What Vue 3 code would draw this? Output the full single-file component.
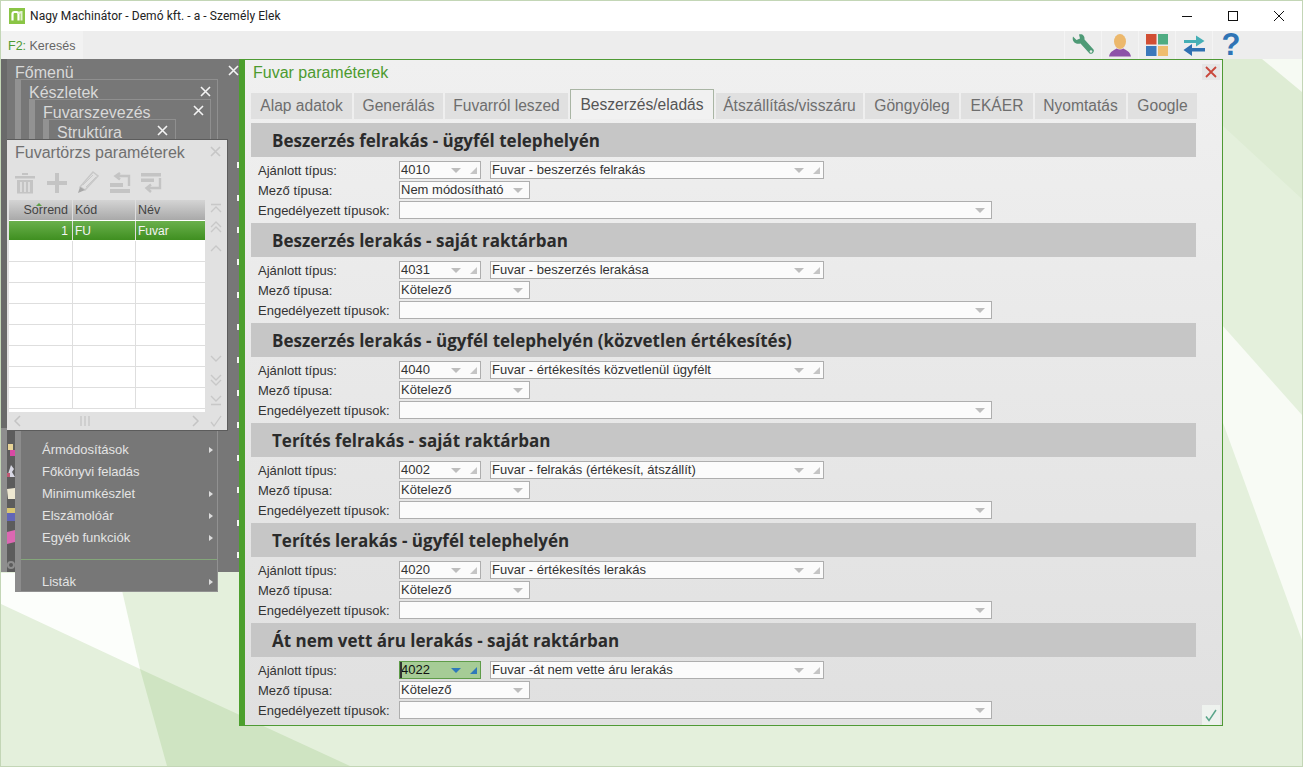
<script setup>
const tabs = [
  { t: 'Alap adatok', w: 101 }, { t: 'Generálás', w: 89 }, { t: 'Fuvarról leszed', w: 123 },
  { t: 'Beszerzés/eladás', w: 144, active: true }, { t: 'Átszállítás/visszáru', w: 147 },
  { t: 'Göngyöleg', w: 94 }, { t: 'EKÁER', w: 72 }, { t: 'Nyomtatás', w: 91 }, { t: 'Google', w: 69 },
]
const sections = [
  { h: 'Beszerzés felrakás - ügyfél telephelyén', c: '4010', d: 'Fuvar - beszerzés felrakás', m: 'Nem módosítható' },
  { h: 'Beszerzés lerakás - saját raktárban', c: '4031', d: 'Fuvar - beszerzés lerakása', m: 'Kötelező' },
  { h: 'Beszerzés lerakás - ügyfél telephelyén (közvetlen értékesítés)', c: '4040', d: 'Fuvar - értékesítés közvetlenül ügyfélt', m: 'Kötelező' },
  { h: 'Terítés felrakás - saját raktárban', c: '4002', d: 'Fuvar - felrakás (értékesít, átszállít)', m: 'Kötelező' },
  { h: 'Terítés lerakás - ügyfél telephelyén', c: '4020', d: 'Fuvar - értékesítés lerakás', m: 'Kötelező' },
  { h: 'Át nem vett áru lerakás - saját raktárban', c: '4022', d: 'Fuvar -át nem vette áru lerakás', m: 'Kötelező', focus: true },
]
const menuItems = [
  { t: 'Ármódosítások', a: true }, { t: 'Főkönyvi feladás' }, { t: 'Minimumkészlet', a: true },
  { t: 'Elszámolóár', a: true }, { t: 'Egyéb funkciók', a: true },
]
const levels = [
  { t: 'Főmenü', c: 'l0' }, { t: 'Készletek', c: 'l1' }, { t: 'Fuvarszevezés', c: 'l2' }, { t: 'Struktúra', c: 'l3' },
]
const emptyRows = [1, 2, 3, 4, 5, 6, 7, 8]
const ticks = [103, 136, 168, 200, 233, 265, 298, 331, 363, 396, 428, 461, 493]
</script>

<template>
  <div class="win">
    <header class="titlebar">
      <svg class="logo" width="16" height="16" viewBox="0 0 16 16">
        <rect width="16" height="16" fill="#8ac545" />
        <path d="M3.500 12.500V6q0-2 2-2h2q2 0 2 2v6.500" fill="none" stroke="#fff" stroke-width="2.200" />
        <path d="M10 6q0-2 2.500-2v8.500" fill="none" stroke="#e4f0d4" stroke-width="2" />
      </svg>
      <span class="apptitle">Nagy Machinátor - Demó kft. - a - Személy Elek</span>
      <div class="caption">
        <svg width="46" height="30" viewBox="0 0 46 30"><path d="M18 15.500h10" stroke="#111" /></svg>
        <svg width="46" height="30" viewBox="0 0 46 30"><rect x="18.500" y="10.500" width="9" height="9" fill="none" stroke="#111" /></svg>
        <svg width="46" height="30" viewBox="0 0 46 30"><path d="M18 10l10 10M28 10L18 20" stroke="#111" /></svg>
      </div>
    </header>
    <div class="toolbar">
      <div class="search"><span class="f2">F2:</span> Keresés</div>
      <div class="tools">
        <span class="tool"><svg width="26" height="26" viewBox="0 0 26 26"><path d="M3 4.500L6.500 8 10 6.500 9 2.500C12 1.500 15 3.500 14.500 7.500L23.500 17.500C25 19.500 22 23 19.500 21.500L10.500 11.500C6 13 1.500 9.500 3 4.500Z" fill="#4e9a76" /><circle cx="21" cy="19.500" r="1.300" fill="#e8efe8" /></svg></span>
        <span class="tool"><svg width="26" height="26" viewBox="0 0 26 26"><ellipse cx="13" cy="9.500" rx="6" ry="7.500" fill="#ecb86c" /><path d="M2 24.500C3 19 7 18.500 9.500 16.500Q13 18.500 16.500 16.500C19 18.500 23 19 24 24.500Z" fill="#8d52a8" /></svg></span>
        <span class="tool"><svg width="26" height="26" viewBox="0 0 26 26"><rect x="2" y="2" width="10.500" height="10.500" fill="#d14e33" /><rect x="14" y="2" width="10" height="10.500" fill="#4fac82" /><rect x="2" y="14" width="10.500" height="10" fill="#3a78ba" /><rect x="14" y="14" width="10" height="10" fill="#efbd6e" /></svg></span>
        <span class="tool"><svg width="26" height="26" viewBox="0 0 26 26"><path d="M3 8h12V3.500L23.500 9 15 14.500V11H3Z" fill="#45afb5" /><path d="M24 16H11v-4L2.500 18 11 24v-4.500h13Z" fill="#2f70b2" /></svg></span>
        <span class="tool qm">?</span>
      </div>
    </div>

    <main class="desktop">
      <svg class="bg" width="1301" height="707" viewBox="0 0 1301 707">
        <path d="M0 514H117L139 610 0 545Z" fill="#fcfefb" />
        <path d="M139 610L349 707H166Z" fill="#cfe4c2" />
        <path d="M1221 0h80v140L1221 66Z" fill="#deecd4" />
        <path d="M1261 0h40v33Z" fill="#f6faf3" />
        <path d="M1221 266l80 90v225L1221 361Z" fill="#f8fbf5" />
      </svg>

      <section class="menus">
        <div class="rail"></div>
        <div class="strip">
          <svg width="8" height="14" viewBox="0 0 8 14"><path d="M1 2h5v6H1Z" fill="#e8d498" /><path d="M3 8h5v6H3Z" fill="#d84aa4" /></svg>
          <svg width="8" height="14" viewBox="0 0 8 14"><path d="M4 1l3 4-2 3 3 5H4L0 13l2-6Z" fill="#d8d8e4" /><path d="M0 9h3v4H0Z" fill="#c05a74" /></svg>
          <svg width="8" height="14" viewBox="0 0 8 14"><path d="M0 3l8-1v11H1Z" fill="#eee8d2" /></svg>
          <svg width="8" height="14" viewBox="0 0 8 14"><path d="M0 0h8v5H0Z" fill="#d8c672" /><path d="M0 5h8v8H0Z" fill="#6266b8" /></svg>
          <svg width="8" height="14" viewBox="0 0 8 14"><path d="M0 2l8-2v12L0 14Z" fill="#dc68b2" /></svg>
          <svg class="gear" width="8" height="8" viewBox="0 0 8 8"><circle cx="4" cy="4" r="3" fill="none" stroke="#8e8e8e" stroke-width="2" /></svg>
        </div>
        <b v-for="y in ticks" :key="y" class="tick" :style="{ top: y + 'px' }"></b>
        <div v-for="l in levels" :key="l.t" class="level" :class="l.c">
          <span class="lt">{{ l.t }}</span>
          <svg class="cx" width="11" height="11" viewBox="0 0 11 11"><path d="M1 1l9 9M10 1l-9 9" stroke="#f4f4f4" stroke-width="1.600" /></svg>
        </div>
        <div class="submenu">
          <div v-for="m in menuItems" :key="m.t" class="mi">{{ m.t }}<em v-if="m.a"></em></div>
          <hr />
          <div class="mi">Listák<em></em></div>
        </div>
      </section>

      <section class="params">
        <div class="ptitle">Fuvartörzs paraméterek</div>
        <svg class="pclose" width="11" height="11" viewBox="0 0 11 11"><path d="M1 1l9 9M10 1l-9 9" stroke="#c6c6c6" stroke-width="1.600" /></svg>
        <div class="picons">
          <svg width="22" height="24" viewBox="0 0 22 24"><path d="M1 5h20v2.500H1ZM8 2h6v2H8ZM3 9h16v13.500H3Z" fill="#c4c4c4" /><path d="M7 11v10M11 11v10M15 11v10" stroke="#e2e2e2" stroke-width="1.600" /></svg>
          <svg width="22" height="22" viewBox="0 0 22 22"><path d="M9 1h4v8h8v4h-8v8H9v-8H1V9h8Z" fill="#c4c4c4" /></svg>
          <svg width="22" height="24" viewBox="0 0 22 24"><path d="M16 1l5 4L8 19 3 16Z" fill="none" stroke="#c8c8c8" stroke-width="1.500" /><path d="M6 14L16 4M9 16L19 6" stroke="#c8c8c8" /><path d="M1 22l2-6 5 3Z" fill="#a8a8a8" /></svg>
          <svg width="22" height="22" viewBox="0 0 22 22"><path d="M1 11h13v4H1ZM1 17h20v4H1Z" fill="#c4c4c4" /><path d="M20 14V4H7M11 1L6.500 4 11 7.500" fill="none" stroke="#c4c4c4" stroke-width="2.400" /></svg>
          <svg width="22" height="22" viewBox="0 0 22 22"><path d="M1 1h20v3.500H1ZM1 6.500h13V10H1Z" fill="#c4c4c4" /><path d="M20 6v10H7M11 12.500L6.500 16 11 20" fill="none" stroke="#c4c4c4" stroke-width="2.400" /></svg>
        </div>
        <div class="gridwrap">
          <div class="grid">
            <div class="gh">
              <span class="c1 r">Sorrend<i class="sort"></i></span><span class="c2">Kód</span><span class="c3">Név</span>
            </div>
            <div class="gr sel"><span class="c1 r">1</span><span class="c2">FU</span><span class="c3">Fuvar</span></div>
            <div v-for="n in emptyRows" :key="n" class="gr"><span class="c1"></span><span class="c2"></span><span class="c3"></span></div>
          </div>
          <div class="scroll">
            <svg width="14" height="54" viewBox="0 0 14 54" fill="none" stroke="#c8c8c8" stroke-width="1.400">
              <path d="M2 4.500h10M2 12l5-5 5 5M2 27l5-5 5 5M2 32l5-5 5 5M2 51l5-5 5 5" />
            </svg>
            <svg width="14" height="60" viewBox="0 0 14 60" fill="none" stroke="#c8c8c8" stroke-width="1.400">
              <path d="M2 4l5 5 5-5M2 23l5 5 5-5M2 28l5 5 5-5M2 44l5 5 5-5M2 52.500h10" />
            </svg>
          </div>
        </div>
        <div class="hbar">
          <svg class="hl" width="10" height="12" viewBox="0 0 10 12"><path d="M8 1L3 6l5 5" fill="none" stroke="#c4c4c4" stroke-width="1.500" /></svg>
          <svg class="hm" width="10" height="12" viewBox="0 0 10 12"><path d="M1 1v10M5 1v10M9 1v10" stroke="#c4c4c4" stroke-width="1.200" /></svg>
          <svg class="hr" width="10" height="12" viewBox="0 0 10 12"><path d="M2 1l5 5-5 5" fill="none" stroke="#c4c4c4" stroke-width="1.500" /></svg>
          <svg class="hc" width="12" height="12" viewBox="0 0 12 12"><path d="M1 7l3 4 7-10" fill="none" stroke="#c8c8c8" stroke-width="1.300" /></svg>
        </div>
      </section>

      <section class="fuvar">
        <div class="ftitle">Fuvar paraméterek</div>
        <button class="fclose" type="button"><svg width="12" height="12" viewBox="0 0 12 12"><path d="M1 1l10 10M11 1L1 11" stroke="#c9463a" stroke-width="1.800" /></svg></button>
        <nav class="tabs">
          <span v-for="t in tabs" :key="t.t" class="tab" :class="{ active: t.active }" :style="{ width: t.w + 'px' }">{{ t.t }}</span>
        </nav>
        <div class="body">
          <div v-for="s in sections" :key="s.h" class="sec">
            <h2>{{ s.h }}</h2>
            <div class="row first">
              <label>Ajánlott típus:</label>
              <div class="inp code" :class="{ focus: s.focus }">
                <i v-if="s.focus" class="caret"></i><span>{{ s.c }}</span><i class="down"></i><i class="corner"></i>
              </div>
              <div class="inp desc"><span>{{ s.d }}</span><i class="down"></i><i class="corner"></i></div>
            </div>
            <div class="row">
              <label>Mező típusa:</label>
              <div class="inp mode"><span>{{ s.m }}</span><i class="down"></i></div>
            </div>
            <div class="row">
              <label>Engedélyezett típusok:</label>
              <div class="inp allow"><span></span><i class="down"></i></div>
            </div>
          </div>
        </div>
        <button class="fok" type="button"><svg width="14" height="14" viewBox="0 0 14 14"><path d="M2 8.500l3 4L12 2" fill="none" stroke="#5aa58a" stroke-width="1.500" /></svg></button>
      </section>
    </main>
  </div>
</template>

<style>
html, body { margin: 0; padding: 0; background: #e4f0dc; overflow: hidden; }
</style>

<style scoped>
.win {
  width: 1303px; height: 767px; box-sizing: border-box;
  border: 1px solid #c3d6b6;
  display: flex; flex-direction: column; overflow: hidden;
  font-family: "Liberation Sans", Arial, sans-serif; background: #e4f0dc;
}
.titlebar { height: 30px; flex: none; background: #fff; display: flex; align-items: center; padding-left: 8px; }
.logo { margin-right: 5px; }
.apptitle { font: 12px Roboto, "Noto Sans", sans-serif; letter-spacing: .07px; color: #222; }
.caption { margin-left: auto; display: flex; }
.caption svg { display: block; }
.toolbar { height: 28px; flex: none; background: #ededed; display: flex; align-items: stretch; }
.search { width: 82px; box-sizing: border-box; padding: 8px 0 0 7px; background: #f2f2f2; font-size: 12.5px; color: #666; }
.f2 { color: #4d9a34; }
.tools { margin-left: auto; margin-right: 53px; display: flex; }
.tool { width: 37px; box-sizing: border-box; border-left: 1px solid #f4f4f4; display: flex; align-items: center; justify-content: center; }
.qm { font: bold 31px "Liberation Sans", sans-serif; color: #2f74b5; line-height: 28px; }

.desktop { position: relative; flex: 1; }
.bg { position: absolute; left: 0; top: 0; }

.menus { position: absolute; left: 0; top: 0; width: 239px; height: 513px; background: #777; color: #ddd; }
.rail { position: absolute; left: 0; top: 0; bottom: 0; width: 6px; background: linear-gradient(#6a6a6a 72%, #8e8e8e 72%); }
.strip { position: absolute; left: 6px; top: 372px; bottom: 0; width: 8px; background: #5c5c5c; display: flex; flex-direction: column; padding-top: 11px; box-sizing: border-box; }
.strip svg { display: block; flex: none; margin-bottom: 8px; }
.strip .gear { margin-top: 9px; }
.tick { position: absolute; left: 236px; width: 2px; height: 6px; background: #f4f4f4; }
.level { position: absolute; box-sizing: border-box; }
.lt { position: absolute; font-size: 16px; color: #d9d9d9; white-space: nowrap; }
.cx { position: absolute; }
.l0 { left: 6px; top: 0; width: 233px; height: 20px; }
.l0 .lt { left: 8px; top: 5px; }
.l0 .cx { left: 221px; top: 6px; }
.l1 { left: 14px; top: 20px; width: 203px; height: 60px; border: 1px solid #8f8f8f; border-left: 6px solid #929292; border-bottom: 0; }
.l1 .lt { left: 8px; top: 4px; }
.l1 .cx { left: 179px; top: 6px; }
.l2 { left: 28px; top: 40px; width: 182px; height: 60px; border: 1px solid #8f8f8f; border-left: 6px solid #929292; border-bottom: 0; }
.l2 .lt { left: 8px; top: 4px; }
.l2 .cx { left: 158px; top: 5px; }
.l3 { left: 42px; top: 60px; width: 133px; height: 40px; border: 1px solid #8f8f8f; border-left: 6px solid #929292; border-bottom: 0; }
.l3 .lt { left: 8px; top: 4px; }
.l3 .cx { left: 108px; top: 5px; }

.submenu { position: absolute; left: 14px; top: 370px; width: 203px; height: 163px; background: #777; box-sizing: border-box; border: 1px solid #919191; border-left: 6px solid #8c8c8c; padding: 9px 0 0 21px; }
.mi { height: 22px; line-height: 22px; font-size: 13px; color: #e4e4e4; position: relative; }
.mi em { position: absolute; left: 167px; top: 8px; border-left: 4px solid #ddd; border-top: 3px solid transparent; border-bottom: 3px solid transparent; }
.submenu hr { height: 1px; border: 0; margin: 10px 0 11px -21px; background: #84a67a; }

.params { position: absolute; left: 6px; top: 80px; width: 221px; height: 292px; box-sizing: border-box; background: #e1e1e1; border: 1px solid #5c5c5c; border-left: 0; }
.ptitle { height: 24px; padding: 4px 0 0 8px; font-size: 16px; color: #707070; box-sizing: border-box; white-space: nowrap; }
.pclose { position: absolute; left: 203px; top: 6px; }
.picons { height: 35px; display: flex; align-items: center; gap: 9.5px; padding-left: 7px; margin-top: 1px; }
.gridwrap { display: flex; padding-left: 2px; }
.grid { width: 196px; background: #fff; }
.gh { height: 20px; display: flex; background: linear-gradient(#d4d4d4, #a9a9a9); font-size: 12.5px; color: #444; line-height: 21px; }
.gr { height: 21px; display: flex; font-size: 12px; line-height: 21px; box-sizing: border-box; border-bottom: 1px solid #dedede; }
.gr.sel { background: linear-gradient(#6ab04c, #3f8f20); color: #f4f4f4; border-top: 1px solid #fff; border-bottom: 1px solid #fff; line-height: 21px; }
.c1 { width: 64px; box-sizing: border-box; border-right: 1px solid #dedede; flex: none; position: relative; padding-right: 4px; }
.c2 { width: 63px; box-sizing: border-box; border-right: 1px solid #dedede; flex: none; padding-left: 2px; }
.c3 { flex: 1; padding-left: 2px; }
.r { text-align: right; }
.sort { position: absolute; left: 27px; top: 3px; border-left: 3px solid transparent; border-right: 3px solid transparent; border-bottom: 3px solid #5f9f45; }
.scroll { flex: 1; padding: 0 0 0 4px; display: flex; flex-direction: column; justify-content: space-between; height: 212px; box-sizing: border-box; }
.scroll svg { display: block; flex: none; }
.hbar { height: 21px; position: relative; }
.hbar svg { position: absolute; top: 3px; }
.hl { left: 5px; }
.hm { left: 73px; }
.hr { left: 184px; }
.hc { left: 203px; }

.fuvar { position: absolute; left: 238px; top: 0; width: 984px; height: 667px; box-sizing: border-box; background: linear-gradient(#f0f0f0, #e0e0e0); border: 1px solid #4f9a35; border-left: 6px solid #4c9f2d; }
.ftitle { font-size: 16px; color: #4c9b2f; padding: 4px 0 0 8px; height: 25px; box-sizing: border-box; }
.fclose { position: absolute; right: 2px; top: 4px; width: 18px; height: 16px; border: 0; padding: 2px 3px; background: #e6e6e6; }
.fclose svg, .fok svg { display: block; }
.tabs { display: flex; gap: 2px; padding-left: 6px; align-items: flex-end; height: 32px; margin-top: 2px; }
.tab { height: 26px; box-sizing: border-box; background: #e0e0e0; color: #6e6e6e; font-size: 15.6px; line-height: 25px; text-align: center; flex: none; white-space: nowrap; }
.tab.active { height: 30px; line-height: 29px; background: #f1f1f1; border: 1px solid #a9b5a4; border-bottom: 0; color: #555; }
.body { padding: 4px 0 0 6px; }
.sec { height: 100px; }
h2 { margin: 0; height: 34px; width: 945px; box-sizing: border-box; background: #c6c6c6; color: #2b2b2b; font: bold 17px/36px "Open Sans", sans-serif; padding-left: 21px; white-space: nowrap; }
.row { height: 20px; display: flex; align-items: center; padding-left: 7px; }
.row.first { margin-top: 3px; }
label { width: 141px; flex: none; font-size: 13px; color: #333; white-space: nowrap; }
.inp { height: 18px; box-sizing: border-box; background: #fbfbfb; border: 1px solid #aeaeae; position: relative; font-size: 13px; line-height: 16px; color: #333; padding-left: 1px; }
.code { width: 82px; margin-right: 9px; }
.desc { width: 334px; }
.mode { width: 131px; }
.allow { width: 593px; }
.down { position: absolute; top: 6px; right: 6px; border-left: 5px solid transparent; border-right: 5px solid transparent; border-top: 5px solid #bdbdbd; }
.code .down, .desc .down { right: 19px; }
.corner { position: absolute; right: 3px; bottom: 4px; border-left: 7px solid transparent; border-bottom: 7px solid #c5c5c5; }
.focus { background: #a6cc96; border-color: #5f9c49; color: #111; }
.focus .down { border-top-color: #2f79b9; }
.focus .corner { border-bottom-color: #2f79b9; }
.caret { position: absolute; left: 0; top: 0; width: 2px; height: 16px; background: #333; }
.fok { position: absolute; right: 2px; bottom: 0; width: 18px; height: 20px; border: 0; padding: 3px 2px; background: #eef2ee; }
</style>
